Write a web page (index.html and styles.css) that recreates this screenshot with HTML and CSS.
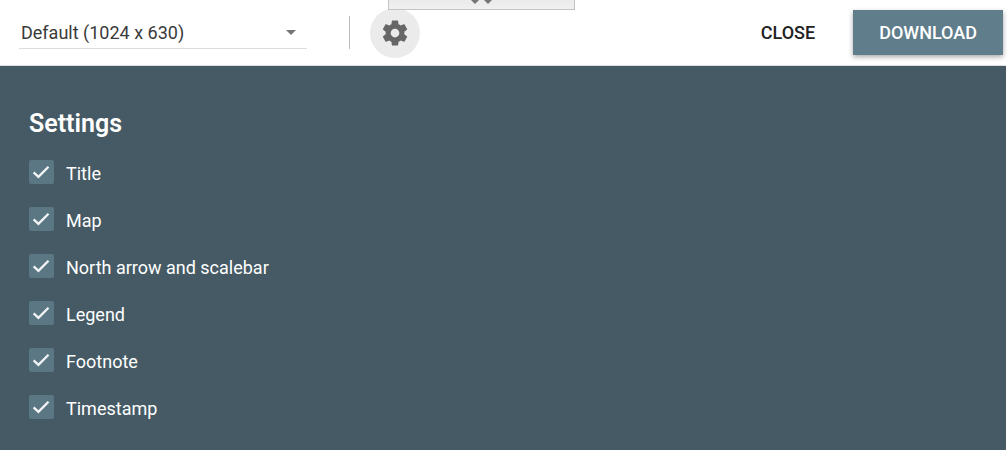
FILE: index.html
```html
<!DOCTYPE html>
<html lang="en">
<head>
<meta charset="utf-8">
<meta name="viewport" content="width=device-width, initial-scale=1">
<title>Download settings</title>
<link rel="stylesheet" href="styles.css">
</head>
<body>
<svg class="defs" aria-hidden="true">
  <symbol id="check" viewBox="0 0 25 25">
    <path d="M4.300 13 9.300 17.500 19.800 7" fill="none" stroke="currentColor" stroke-width="2.4"/>
  </symbol>
</svg>
<header class="toolbar">
  <div class="size">
    <select class="size-select" aria-label="Image size">
      <option>Default (1024 x 630)</option>
    </select>
    <svg class="size-arrow" viewBox="0 0 10 5" aria-hidden="true"><path d="M0 0h10L5 5z" fill="currentColor"/></svg>
  </div>
  <div class="divider"></div>
  <button class="icon-button" type="button" aria-label="Settings">
    <svg class="gear" viewBox="0 0 24 24" aria-hidden="true"><path fill="currentColor" d="M19.43 12.98c.04-.32.07-.64.07-.98s-.03-.66-.07-.98l2.11-1.65c.19-.15.24-.42.12-.64l-2-3.46c-.12-.22-.39-.3-.61-.22l-2.49 1c-.52-.4-1.08-.73-1.69-.98l-.38-2.65C14.46 2.18 14.25 2 14 2h-4c-.25 0-.46.18-.49.42l-.38 2.65c-.61.25-1.17.59-1.69.98l-2.49-1c-.23-.09-.49 0-.61.22l-2 3.46c-.13.22-.07.49.12.64l2.11 1.65c-.04.32-.07.65-.07.98s.03.66.07.98l-2.11 1.65c-.19.15-.24.42-.12.64l2 3.46c.12.22.39.3.61.22l2.49-1c.52.4 1.08.73 1.69.98l.38 2.65c.03.24.24.42.49.42h4c.25 0 .46-.18.49-.42l.38-2.65c.61-.25 1.17-.59 1.69-.98l2.49 1c.23.09.49 0 .61-.22l2-3.46c.12-.22.07-.49-.12-.64l-2.11-1.65zM12 15.5c-1.93 0-3.5-1.57-3.5-3.5s1.57-3.5 3.5-3.5 3.5 1.57 3.5 3.5-1.57 3.5-3.5 3.5z"/></svg>
  </button>
  <div class="actions">
    <button class="button" type="button">CLOSE</button>
    <button class="button button-primary" type="button">DOWNLOAD</button>
  </div>
  <div class="handle">
    <svg class="handle-marks" viewBox="0 0 22 4" aria-hidden="true"><path d="M0 0h8L4 4zM13 0h8l-4 4z" fill="currentColor"/></svg>
  </div>
</header>
<main class="settings">
  <h1 class="settings-title">Settings</h1>
  <label class="option"><span class="box"><input class="box-input" type="checkbox" checked><svg class="box-mark" aria-hidden="true"><use href="#check"/></svg></span>Title</label>
  <label class="option"><span class="box"><input class="box-input" type="checkbox" checked><svg class="box-mark" aria-hidden="true"><use href="#check"/></svg></span>Map</label>
  <label class="option"><span class="box"><input class="box-input" type="checkbox" checked><svg class="box-mark" aria-hidden="true"><use href="#check"/></svg></span>North arrow and scalebar</label>
  <label class="option"><span class="box"><input class="box-input" type="checkbox" checked><svg class="box-mark" aria-hidden="true"><use href="#check"/></svg></span>Legend</label>
  <label class="option"><span class="box"><input class="box-input" type="checkbox" checked><svg class="box-mark" aria-hidden="true"><use href="#check"/></svg></span>Footnote</label>
  <label class="option"><span class="box"><input class="box-input" type="checkbox" checked><svg class="box-mark" aria-hidden="true"><use href="#check"/></svg></span>Timestamp</label>
</main>
</body>
</html>
```
FILE: styles.css
```css
* {
  box-sizing: border-box;
}

body {
  display: flex;
  flex-direction: column;
  min-height: 100vh;
  margin: 0;
  padding-right: 1px;
  background: #fff;
  font-family: Roboto, "Liberation Sans", sans-serif;
  font-size: 18px;
}

.defs {
  display: none;
}

.toolbar {
  position: relative;
  display: flex;
  align-items: center;
  min-height: 66px;
  padding: 0 3px 0 19px;
  border-bottom: 1px solid #dcdfe1;
}

.size {
  display: grid;
  align-items: center;
  width: 288px;
}

.size-select {
  grid-area: 1 / 1;
  width: 100%;
  height: 32px;
  padding: 0 32px 0 2px;
  border: 0;
  border-bottom: 1px solid #dcdcdc;
  border-radius: 0;
  appearance: none;
  background: transparent;
  color: #3a3a3a;
  font: inherit;
}

.size-arrow {
  grid-area: 1 / 1;
  justify-self: end;
  width: 10px;
  height: 5px;
  margin-right: 11px;
  color: #757575;
  pointer-events: none;
}

.divider {
  width: 1px;
  height: 33px;
  margin: 0 20px 0 42px;
  background: #bdbdbd;
}

.icon-button {
  display: grid;
  place-items: center;
  width: 50px;
  height: 50px;
  padding: 0;
  border: 0;
  border-radius: 50%;
  background: #ebebeb;
  color: #666;
}

.gear {
  width: 30px;
  height: 30px;
}

.actions {
  display: flex;
  gap: 12px;
  margin-left: auto;
}

.button {
  height: 45px;
  padding: 0 26px;
  border: 0;
  background: transparent;
  color: #212121;
  font: inherit;
  font-weight: 500;
}

.button-primary {
  background: #607d8b;
  box-shadow: 0 2px 5px rgba(0, 0, 0, 0.35);
  color: #fff;
}

.handle {
  position: absolute;
  top: 0;
  left: 388px;
  display: flex;
  justify-content: center;
  width: 187px;
  height: 10px;
  border: 1px solid #c4c4c4;
  border-top: 0;
  background: linear-gradient(#ebebeb, #f0f0f0);
}

.handle-marks {
  width: 22px;
  height: 4px;
  color: #757575;
}

.settings {
  flex: 1;
  padding: 41px 29px 16px;
  background: #455a64;
  color: #fff;
}

.settings-title {
  margin: 0 0 9px;
  font-size: 25px;
  font-weight: 600;
  line-height: 33px;
}

.option {
  display: flex;
  align-items: center;
  gap: 12px;
  height: 47px;
  padding-top: 3px;
  line-height: 24px;
}

.box {
  display: grid;
  padding-bottom: 4px;
}

.box-input {
  grid-area: 1 / 1;
  width: 25px;
  height: 24px;
  margin: 0;
  border-radius: 2px;
  appearance: none;
  background: #5b7784;
}

.box-mark {
  grid-area: 1 / 1;
  width: 25px;
  height: 24px;
  color: #f2f4f5;
  pointer-events: none;
  visibility: hidden;
}

.box-input:checked + .box-mark {
  visibility: visible;
}
```
